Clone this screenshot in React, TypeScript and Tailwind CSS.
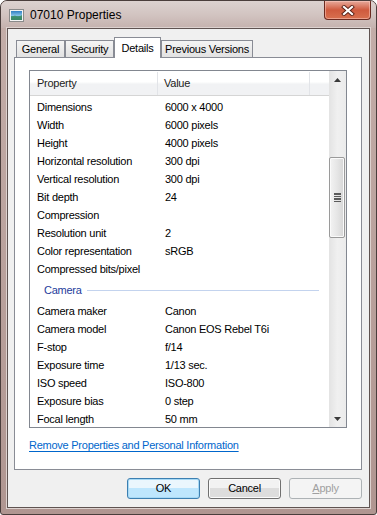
import React from "react";

const general: [string, string][] = [
  ["Dimensions", "6000 x 4000"],
  ["Width", "6000 pixels"],
  ["Height", "4000 pixels"],
  ["Horizontal resolution", "300 dpi"],
  ["Vertical resolution", "300 dpi"],
  ["Bit depth", "24"],
  ["Compression", ""],
  ["Resolution unit", "2"],
  ["Color representation", "sRGB"],
  ["Compressed bits/pixel", ""],
];

const camera: [string, string][] = [
  ["Camera maker", "Canon"],
  ["Camera model", "Canon EOS Rebel T6i"],
  ["F-stop", "f/14"],
  ["Exposure time", "1/13 sec."],
  ["ISO speed", "ISO-800"],
  ["Exposure bias", "0 step"],
  ["Focal length", "50 mm"],
];

function Row({ k, v }: { k: string; v: string }) {
  return (
    <div className="flex h-[18px] items-center whitespace-nowrap text-black">
      <div className="w-[135px] shrink-0 pl-[7px]">{k}</div>
      <div className="flex-1">{v}</div>
    </div>
  );
}

function Tab({ label, active, w }: { label: string; active?: boolean; w: string }) {
  if (active) {
    return (
      <div
        className={`${w} relative z-10 -mb-[1px] flex h-[21px] items-start justify-center border border-b-0 border-[#898c95] bg-white pt-[2px] text-black`}
      >
        {label}
      </div>
    );
  }
  return (
    <div
      className={`${w} flex h-[17px] items-center justify-center border border-b-0 border-[#898c95] bg-gradient-to-b from-[#f4f4f4] to-[#e2e2e2] pt-[1px] text-black`}
    >
      {label}
    </div>
  );
}

export default function App() {
  return (
    <div className="font-['Liberation_Sans',Arial,sans-serif] text-[11px] tracking-[-0.25px]">
      <div className="flex h-[515px] w-[377px] flex-col overflow-hidden rounded-t-[7px] rounded-b-[3px] border border-[#4a3e3c] bg-gradient-to-b from-[#c4aea9] to-[#b09691]">
        {/* Title bar */}
        <div className="flex h-[27px] shrink-0 bg-gradient-to-b from-[#dcd2d0] via-[#d2c4c1] to-[#c5b2ae]">
          <div className="flex flex-1 items-center pl-[8px]">
            <svg width="15" height="13" viewBox="0 0 15 13" className="mt-[1px]">
              <defs>
                <linearGradient id="sky" x1="0" y1="0" x2="0" y2="1">
                  <stop offset="0" stopColor="#2f7fc4" />
                  <stop offset="0.55" stopColor="#8cc6ea" />
                  <stop offset="0.56" stopColor="#4a9a8a" />
                  <stop offset="1" stopColor="#1d6b63" />
                </linearGradient>
              </defs>
              <rect x="0.5" y="0.5" width="14" height="12" fill="#f4f4f4" stroke="#8a8a8a" />
              <rect x="2" y="2" width="11" height="9" fill="url(#sky)" />
              <path d="M2 8 L6 6.5 L9 8 L13 6 L13 11 L2 11 Z" fill="#3f8f6a" opacity="0.8" />
            </svg>
            <span className="ml-[6px] text-[12px] tracking-normal text-black">07010 Properties</span>
          </div>
          <div className="mr-[5px] flex h-[19px] w-[47px] items-center justify-center rounded-b-[4px] border border-t-0 border-[#6b2a20] bg-gradient-to-b from-[#e6a99b] via-[#cf5a3e] to-[#d8704f] shadow-[inset_0_0_0_1px_rgba(255,210,200,0.5)]">
            <svg width="14" height="11" viewBox="0 0 14 11">
              <path d="M3 2 L11 9 M11 2 L3 9" stroke="#5a2218" strokeWidth="4" strokeLinecap="square" />
              <path d="M3 2 L11 9 M11 2 L3 9" stroke="#ffffff" strokeWidth="2.2" strokeLinecap="square" />
            </svg>
          </div>
        </div>

        {/* Client area */}
        <div className="mx-[6px] flex h-[480px] shrink-0 flex-col border border-[#5f5351] bg-[#f0f0f0] shadow-[0_0_0_1px_#ddd2cf]">
          {/* Tabs */}
          <div className="mt-[8px] flex h-[20px] items-end pl-[8px]">
            <Tab label="General" w="w-[49px]" />
            <Tab label="Security" w="w-[49px]" />
            <Tab label="Details" active w="w-[47px]" />
            <Tab label="Previous Versions" w="w-[92px]" />
          </div>

          {/* Panel */}
          <div className="ml-[6px] flex h-[413px] w-[348px] flex-col border border-[#898c95] bg-white px-[14px] pt-[12px]">
            {/* List view */}
            <div className="flex h-[358px] w-[318px] border border-[#828790] bg-white">
              <div className="flex w-[299px] flex-col overflow-hidden">
                {/* Header */}
                <div className="flex h-[25px] shrink-0 border-b border-[#d5d5d5] bg-gradient-to-b from-white from-45% to-[#f1f2f4] to-55% pt-[1px] text-[#222]">
                  <div className="flex w-[128px] items-center border-r border-[#e2e4e8] pl-[7px]">Property</div>
                  <div className="flex w-[152px] items-center border-r border-[#e2e4e8] pl-[6px]">Value</div>
                  <div className="flex-1" />
                </div>
                <div className="pt-[2px]">
                  {general.map(([k, v]) => (
                    <Row key={k} k={k} v={v} />
                  ))}
                  <div className="flex h-[24px] items-center pl-[14px] pr-[10px]">
                    <span className="text-[#1e3c9c]">Camera</span>
                    <div className="ml-[5px] mt-[1px] h-[1px] flex-1 bg-[#c3d3ee]" />
                  </div>
                  {camera.map(([k, v]) => (
                    <Row key={k} k={k} v={v} />
                  ))}
                </div>
              </div>
              {/* Scrollbar */}
              <div className="flex w-[17px] flex-col bg-gradient-to-r from-[#e3e3e3] via-[#f0f0f0] to-[#ebebeb]">
                <div className="flex h-[17px] items-center justify-center">
                  <svg width="7" height="4" viewBox="0 0 7 4">
                    <path d="M3.5 0 L7 4 L0 4 Z" fill="#3a3a3a" />
                  </svg>
                </div>
                <div className="flex-1">
                  <div className="ml-0 mt-[69px] flex h-[81px] w-[16px] items-center justify-center rounded-[2px] border border-[#9a9a9a] bg-gradient-to-r from-[#f3f3f3] via-[#e6e6e6] to-[#d6d6d6] shadow-[inset_0_0_0_1px_#fafafa]">
                    <div className="flex flex-col gap-[1px]">
                      <div className="h-[1.5px] w-[7px] bg-[#5a5a5a]" />
                      <div className="h-[1.5px] w-[7px] bg-[#5a5a5a]" />
                      <div className="h-[1.5px] w-[7px] bg-[#5a5a5a]" />
                      <div className="h-[1.5px] w-[7px] bg-[#5a5a5a]" />
                    </div>
                  </div>
                </div>
                <div className="flex h-[17px] items-center justify-center">
                  <svg width="7" height="4" viewBox="0 0 7 4">
                    <path d="M0 0 L7 0 L3.5 4 Z" fill="#3a3a3a" />
                  </svg>
                </div>
              </div>
            </div>
            <div className="mt-[11px] leading-[13px]">
              <span className="text-[#0066cc] underline underline-offset-[2px]">
                Remove Properties and Personal Information
              </span>
            </div>
          </div>

          {/* Buttons */}
          <div className="mt-[8px] flex justify-end gap-[8px] pr-[7px]">
            <div className="flex h-[21px] w-[73px] items-center justify-center rounded-[3px] border border-[#3c7fb1] bg-gradient-to-b from-[#eaf6fd] from-50% to-[#bee6fd] to-50% text-black shadow-[inset_0_0_0_1px_#a7d9f5]">
              OK
            </div>
            <div className="flex h-[21px] w-[73px] items-center justify-center rounded-[3px] border border-[#707070] bg-gradient-to-b from-[#f2f2f2] from-50% to-[#dddddd] to-50% text-black shadow-[inset_0_0_0_1px_#fbfbfb]">
              Cancel
            </div>
            <div className="flex h-[21px] w-[73px] items-center justify-center rounded-[3px] border border-[#adb2b5] bg-[#f4f4f4] text-[#a0a0a0]">
              <span>
                <span className="underline">A</span>pply
              </span>
            </div>
          </div>
        </div>
      </div>
    </div>
  );
}
